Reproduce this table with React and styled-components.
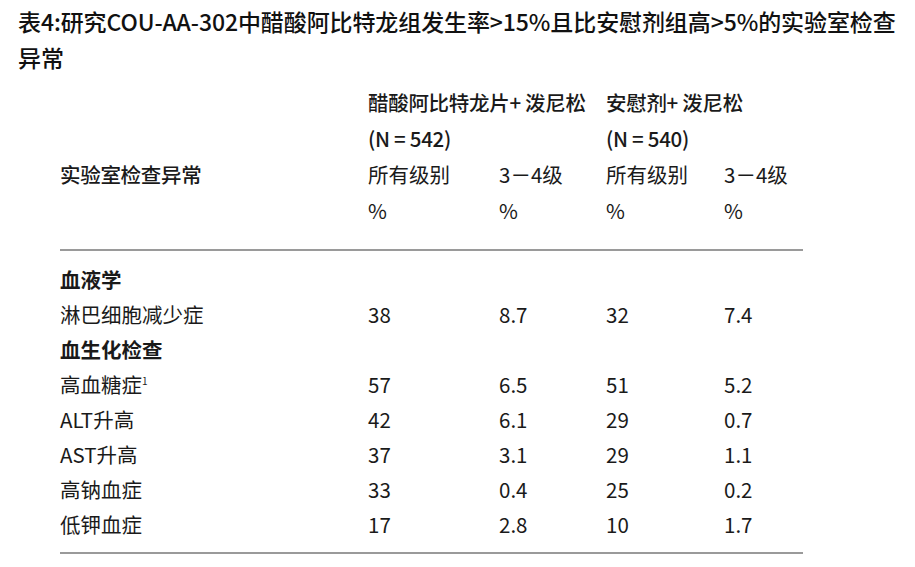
import React from "react";
import styled, { createGlobalStyle } from "styled-components";

const Global = createGlobalStyle`
  html, body { margin: 0; padding: 0; background: #fff; }
  body {
    font-family: "Noto Sans CJK SC", "Noto Sans", sans-serif;
    color: #1a1a1a;
  }
`;

const Page = styled.div`
  width: 915px;
  height: 567px;
  overflow: hidden;
  background: #fff;
`;

const Title = styled.h1`
  margin: 0;
  padding: 3px 14px 0 18px;
  font-size: 23px;
  line-height: 36px;
  font-weight: 500;
  letter-spacing: -0.1px;
  color: #111;
`;

const Table = styled.div`
  margin: 9px 0 0 60px;
  width: 743px;
  display: grid;
  grid-template-columns: 308px 131px 107px 118px 79px;
  font-size: 20.5px;
`;

const HeadCell = styled.div`
  height: 36px;
  line-height: 36px;
  white-space: nowrap;
  font-weight: ${(p) => (p.$bold ? 500 : 400)};
  letter-spacing: ${(p) => (p.$bold ? "-0.3px" : "0")};
  grid-column: ${(p) => p.$span || "auto"};
  color: #1a1a1a;
`;

const Rule = styled.div`
  grid-column: 1 / -1;
  height: 2px;
  background: #9a9a9a;
  margin: ${(p) => p.$m};
`;

const Cell = styled.div`
  height: 35px;
  line-height: 35px;
  white-space: nowrap;
  font-weight: ${(p) => (p.$bold ? 700 : 400)};
  grid-column: ${(p) => p.$span || "auto"};
  color: #1a1a1a;
`;

const Sup = styled.sup`
  font-size: 10px;
  vertical-align: 8px;
  line-height: 0;
`;

const rows = [
  { section: "血液学" },
  { label: "淋巴细胞减少症", v: ["38", "8.7", "32", "7.4"] },
  { section: "血生化检查" },
  { label: "高血糖症", sup: "1", v: ["57", "6.5", "51", "5.2"] },
  { label: "ALT升高", v: ["42", "6.1", "29", "0.7"] },
  { label: "AST升高", v: ["37", "3.1", "29", "1.1"] },
  { label: "高钠血症", v: ["33", "0.4", "25", "0.2"] },
  { label: "低钾血症", v: ["17", "2.8", "10", "1.7"] },
];

export default function App() {
  return (
    <Page>
      <Global />
      <Title>
        表4:研究COU-AA-302中醋酸阿比特龙组发生率&gt;15%且比安慰剂组高&gt;5%的实验室检查异常
      </Title>
      <Table>
        <HeadCell />
        <HeadCell $bold $span="span 2">醋酸阿比特龙片+ 泼尼松</HeadCell>
        <HeadCell $bold $span="span 2">安慰剂+ 泼尼松</HeadCell>

        <HeadCell />
        <HeadCell $bold $span="span 2">(N = 542)</HeadCell>
        <HeadCell $bold $span="span 2">(N = 540)</HeadCell>

        <HeadCell $bold>实验室检查异常</HeadCell>
        <HeadCell>所有级别</HeadCell>
        <HeadCell>3－4级</HeadCell>
        <HeadCell>所有级别</HeadCell>
        <HeadCell>3－4级</HeadCell>

        <HeadCell />
        <HeadCell>%</HeadCell>
        <HeadCell>%</HeadCell>
        <HeadCell>%</HeadCell>
        <HeadCell>%</HeadCell>

        <Rule $m="21px 0 11px" />

        {rows.map((r, i) =>
          r.section ? (
            <Cell key={i} $bold $span="1 / -1">{r.section}</Cell>
          ) : (
            <React.Fragment key={i}>
              <Cell>
                {r.label}
                {r.sup && <Sup>{r.sup}</Sup>}
              </Cell>
              {r.v.map((x, j) => (
                <Cell key={j}>{x}</Cell>
              ))}
            </React.Fragment>
          )
        )}

        <Rule $m="10px 0 0" />
      </Table>
    </Page>
  );
}
